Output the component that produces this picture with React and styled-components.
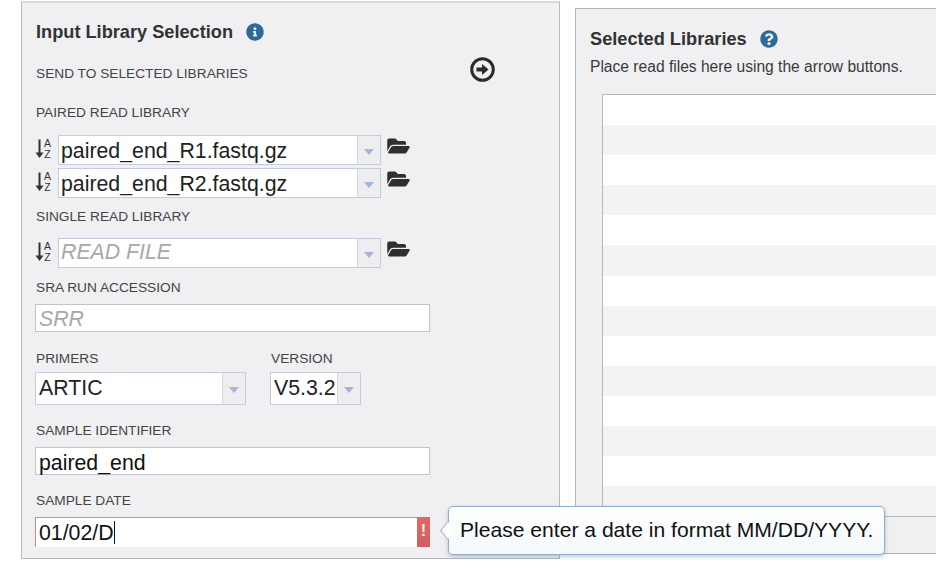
import styled, { createGlobalStyle } from "styled-components";
import { FaInfoCircle, FaQuestionCircle, FaFolderOpen } from "react-icons/fa";

const GlobalStyle = createGlobalStyle`
  html, body {
    margin: 0;
    background: #fff;
    overflow: hidden;
  }
  body {
    font-family: "Liberation Sans", Arial, sans-serif;
  }
`;

const Page = styled.div`
  display: flex;
  align-items: flex-start;
  width: 936px;
  height: 574px;
  overflow: hidden;
  padding: 1px 0 0 21px;
  box-sizing: border-box;
`;

const InputPanel = styled.div`
  position: relative;
  flex: none;
  box-sizing: border-box;
  width: 539px;
  height: 558px;
  padding: 18px 0 0 13px;
  background: #f0f0f3;
  border: 1px solid #b9b9bc;
  border-top: 2px solid #d8d8d8;
`;

const ResultPanel = styled.div`
  flex: none;
  box-sizing: border-box;
  width: 500px;
  height: 546px;
  margin: 7px 0 0 15px;
  padding: 19px 0 0 14px;
  background: #f0f0f3;
  border: 1px solid #b4b4b6;
`;

const Heading = styled.div`
  display: flex;
  align-items: center;
  gap: 13px;
  height: 22px;
  padding-left: ${(p) => p.$inset ?? 0}px;
  font-size: 18.2px;
  font-weight: 700;
  color: #333;
  svg {
    font-size: 18px;
    color: #2e6a96;
  }
`;

const Hint = styled.div`
  height: 18px;
  margin-top: 8px;
  font-size: 15.6px;
  line-height: 18px;
  color: #3a3a3a;
`;

const Label = styled.div`
  height: 16px;
  margin-top: ${(p) => p.$top}px;
  padding-left: 1px;
  font-size: 13.7px;
  line-height: 18px;
  color: #444;
`;

const SendRow = styled.div`
  display: flex;
  align-items: flex-start;
  height: 24px;
  margin-top: 15px;
  ${Label} {
    margin-top: 7px;
    width: 434px;
  }
`;

const GoIcon = styled.svg`
  flex: none;
  width: 25px;
  height: 25px;
  margin-top: -1px;
`;

const FileRow = styled.div`
  display: flex;
  align-items: flex-start;
  margin-top: ${(p) => p.$top}px;
`;

const SortIcon = styled.svg`
  flex: none;
  width: 18px;
  height: 22px;
  margin: 3px 5px 0 0;
`;

const SortLetter = styled.text`
  font-family: "Liberation Sans", Arial, sans-serif;
  font-size: 10.5px;
  text-anchor: middle;
  fill: #333;
`;

const FolderIcon = styled(FaFolderOpen)`
  flex: none;
  width: 23px;
  height: 20px;
  margin: 1px 0 0 6px;
  color: #2f2f2f;
`;

const Combo = styled.div`
  display: flex;
  box-sizing: border-box;
  width: ${(p) => p.$width}px;
  height: ${(p) => p.$height}px;
  background: #fff;
  border: 1px solid #c5cbd8;
`;

const ComboText = styled.div`
  flex: 1;
  min-width: 0;
  padding-left: ${(p) => p.$pad ?? 2}px;
  font-size: 21.3px;
  line-height: ${(p) => p.$line}px;
  white-space: nowrap;
  color: ${(p) => (p.$placeholder ? "#a8a8a8" : "#222")};
  font-style: ${(p) => (p.$placeholder ? "italic" : "normal")};
`;

const ComboArrow = styled.div`
  flex: none;
  display: flex;
  align-items: center;
  justify-content: center;
  width: 22px;
  background: #eeeef0;
  border-left: 1px solid #d5d8e0;
  &::after {
    content: "";
    margin-top: 3px;
    border-left: 5px solid transparent;
    border-right: 5px solid transparent;
    border-top: 6px solid #a3b6d8;
  }
`;

const ChoiceRow = styled.div`
  display: flex;
  gap: 24px;
`;

const Choice = styled.div`
  display: flex;
  flex-direction: column;
`;

const TextBox = styled.div`
  position: relative;
  box-sizing: border-box;
  width: 395px;
  height: ${(p) => p.$height}px;
  margin-top: 9px;
  padding-left: 3px;
  font-size: 21.3px;
  line-height: ${(p) => p.$line}px;
  white-space: nowrap;
  background: #fff;
  color: ${(p) => (p.$placeholder ? "#a8a8a8" : "#111")};
  font-style: ${(p) => (p.$placeholder ? "italic" : "normal")};
  border: 1px solid #c2c4cc;
  ${(p) =>
    p.$invalid &&
    `
    border-color: #cf8a88 transparent transparent #cf8a88;
  `}
`;

const Caret = styled.span`
  display: inline-block;
  width: 1px;
  height: 23px;
  vertical-align: -4px;
  background: #111;
`;

const ErrorFlag = styled.div`
  position: absolute;
  top: -1px;
  right: -1px;
  width: 13px;
  height: 30px;
  text-align: center;
  font-size: 16px;
  font-weight: 700;
  font-style: normal;
  line-height: 28px;
  color: #f8e6e6;
  background: linear-gradient(#dc6a68, #cf5f5f);
`;

const Tooltip = styled.div`
  position: absolute;
  left: 426px;
  top: 503px;
  z-index: 2;
  box-sizing: border-box;
  width: 437px;
  height: 49px;
  padding-left: 11px;
  font-size: 21.1px;
  line-height: 45px;
  white-space: nowrap;
  color: #111;
  background: linear-gradient(#fff, #f4f9fd);
  border: 1px solid #8fadc9;
  border-radius: 5px;
  box-shadow: 0 2px 4px rgba(60, 80, 110, 0.3);
  &::before {
    content: "";
    position: absolute;
    left: -8px;
    top: 17px;
    width: 12px;
    height: 12px;
    background: #fff;
    border-left: 1px solid #8fadc9;
    border-bottom: 1px solid #8fadc9;
    transform: scaleX(0.8) rotate(45deg);
  }
`;

const LibraryTable = styled.div`
  box-sizing: border-box;
  width: 480px;
  margin: 18px 0 0 12px;
  border: 1px solid #b8b8ba;
  border-right: 0;
`;

const TableRow = styled.div`
  height: 30.1px;
  background: ${(p) => (p.$odd ? "#f3f3f4" : "#fff")};
`;

const rows = Array.from({ length: 14 }, (_, i) => i);

function Sort() {
  return (
    <SortIcon viewBox="0 0 18 22">
      <path d="M4.5 1.5V16" stroke="#333" strokeWidth="2" fill="none" />
      <path d="M0.5 14.5H8.5L4.5 20Z" fill="#333" />
      <SortLetter x="12.5" y="9">A</SortLetter>
      <SortLetter x="12.5" y="20">Z</SortLetter>
    </SortIcon>
  );
}

function FilePicker({ children, top, placeholder, line = 30 }) {
  return (
    <FileRow $top={top}>
      <Sort />
      <Combo $width={323} $height={30}>
        <ComboText $line={line} $placeholder={placeholder}>{children}</ComboText>
        <ComboArrow />
      </Combo>
      <FolderIcon />
    </FileRow>
  );
}

export default function App() {
  return (
    <>
      <GlobalStyle />
      <Page>
        <InputPanel>
          <Heading $inset={1}>
            Input Library Selection
            <FaInfoCircle />
          </Heading>
          <SendRow>
            <Label>SEND TO SELECTED LIBRARIES</Label>
            <GoIcon viewBox="0 0 25 25">
              <circle cx="12.5" cy="12.5" r="10.8" fill="none" stroke="#2b2b2b" strokeWidth="3" />
              <path d="M6.5 10.6H12V7L18.6 12.5L12 18V14.4H6.5Z" fill="#2b2b2b" />
            </GoIcon>
          </SendRow>
          <Label $top={22}>PAIRED READ LIBRARY</Label>
          <FilePicker top={15}>paired_end_R1.fastq.gz</FilePicker>
          <FilePicker top={3}>paired_end_R2.fastq.gz</FilePicker>
          <Label $top={10}>SINGLE READ LIBRARY</Label>
          <FilePicker top={14} line={27} placeholder>READ FILE</FilePicker>
          <Label $top={11}>SRA RUN ACCESSION</Label>
          <TextBox $height={28} $line={28} $placeholder>SRR</TextBox>
          <ChoiceRow>
            <Choice>
              <Label $top={18}>PRIMERS</Label>
              <FileRow $top={6}>
                <Combo $width={211} $height={33}>
                  <ComboText $line={31} $pad={3}>ARTIC</ComboText>
                  <ComboArrow />
                </Combo>
              </FileRow>
            </Choice>
            <Choice>
              <Label $top={18}>VERSION</Label>
              <FileRow $top={6}>
                <Combo $width={91} $height={33}>
                  <ComboText $line={31} $pad={3}>V5.3.2</ComboText>
                  <ComboArrow />
                </Combo>
              </FileRow>
            </Choice>
          </ChoiceRow>
          <Label $top={17}>SAMPLE IDENTIFIER</Label>
          <TextBox $height={28} $line={30}>paired_end</TextBox>
          <Label $top={17}>SAMPLE DATE</Label>
          <TextBox $height={30} $line={30} $invalid>
            01/02/D
            <Caret />
            <ErrorFlag>!</ErrorFlag>
          </TextBox>
          <Tooltip>Please enter a date in format MM/DD/YYYY.</Tooltip>
        </InputPanel>
        <ResultPanel>
          <Heading>
            Selected Libraries
            <FaQuestionCircle />
          </Heading>
          <Hint>Place read files here using the arrow buttons.</Hint>
          <LibraryTable>
            {rows.map((i) => (
              <TableRow key={i} $odd={i % 2 === 1} />
            ))}
          </LibraryTable>
        </ResultPanel>
      </Page>
    </>
  );
}
